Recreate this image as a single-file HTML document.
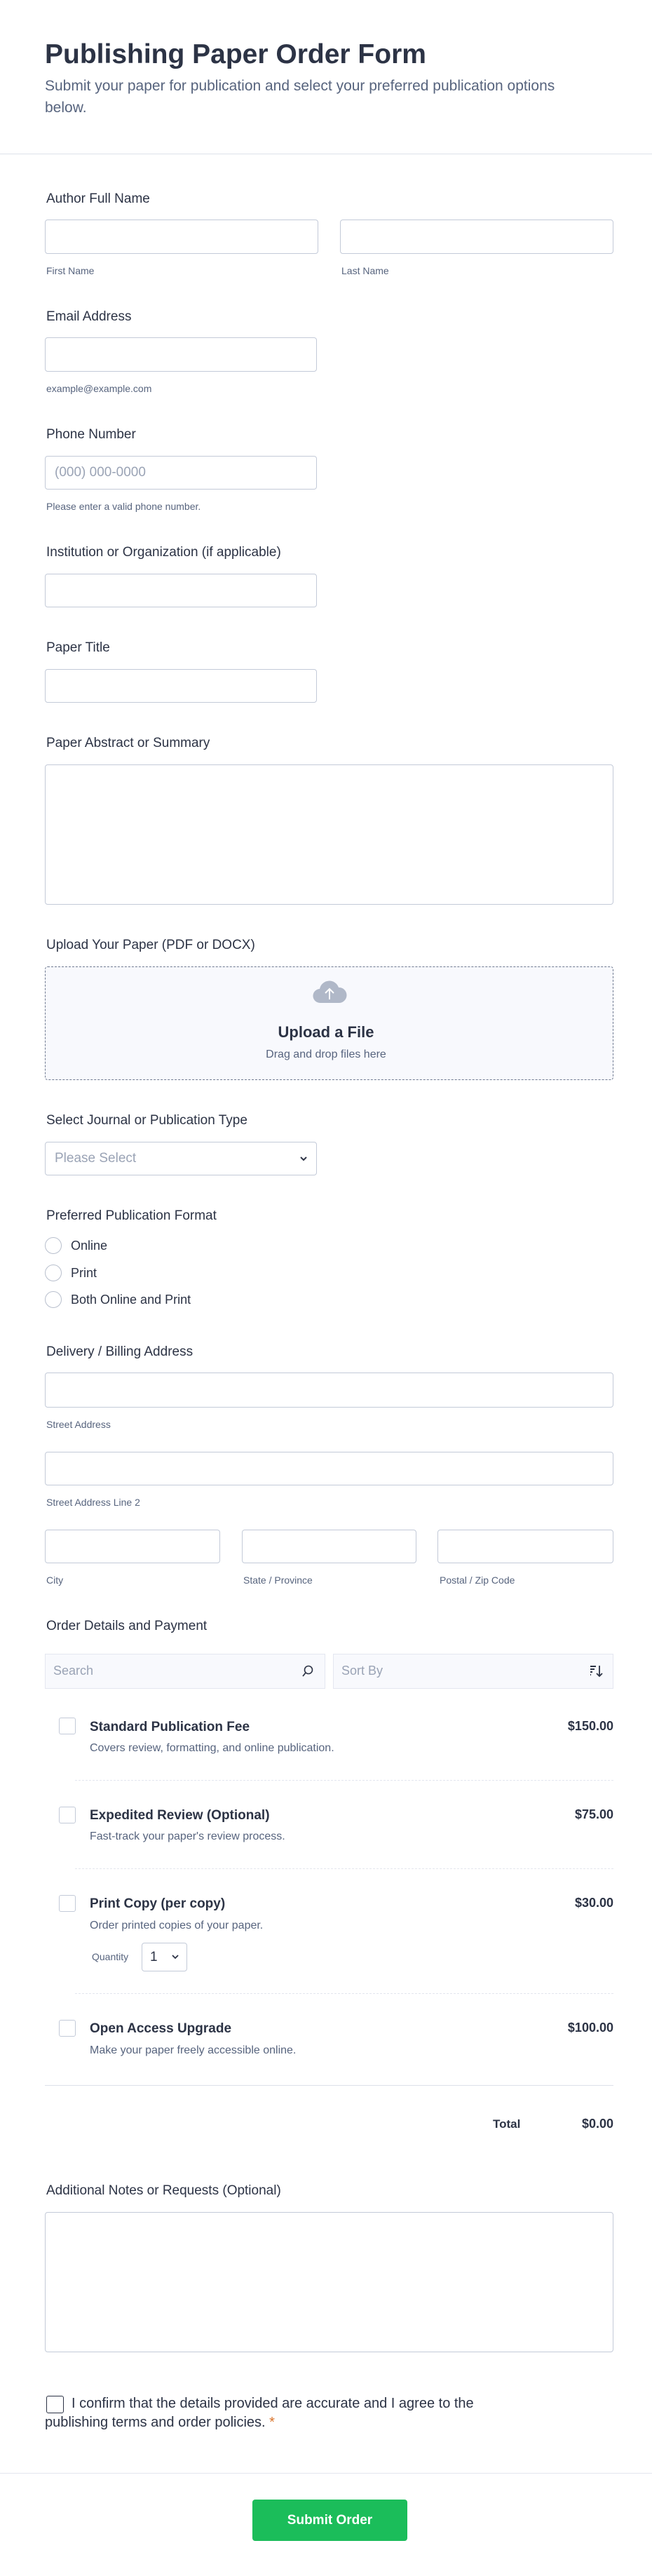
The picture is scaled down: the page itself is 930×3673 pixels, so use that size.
<!DOCTYPE html>
<html><head><meta charset="utf-8"><style>
*{box-sizing:border-box;margin:0;padding:0}
body{width:930px;height:3673px;position:relative;background:#fff;font-family:"Liberation Sans",sans-serif;color:#2c3345;overflow:hidden}
.a{position:absolute}
.lbl{position:absolute;left:66px;font-size:19px;color:#2c3345;line-height:24px}
.sub{position:absolute;font-size:14px;color:#57647e;line-height:16px}
.in{position:absolute;border:1px solid #c3cad8;border-radius:4px;background:#fff}
.ph{color:#9aa3b5;font-size:19px;position:absolute;left:16px}
.radio{position:absolute;left:64px;width:24px;height:24px;border:1px solid #b8bfcd;border-radius:50%}
.rt{position:absolute;left:101px;font-size:18px;line-height:22px}
.cb{position:absolute;left:84px;width:24px;height:24px;border:1px solid #c3cad8;border-radius:3px}
.it{position:absolute;left:128px;font-size:19px;font-weight:bold;line-height:24px}
.id{position:absolute;left:128px;font-size:16px;color:#57647e;line-height:20px}
.pr{position:absolute;right:55px;font-size:18px;font-weight:bold;line-height:22px}
.dash{position:absolute;left:107px;width:768px;border-top:1px dashed #e3e6ee}
</style></head><body>
<div class="a" style="left:64px;top:54px;font-size:39px;font-weight:bold;line-height:48px;color:#2c3345">Publishing Paper Order Form</div>
<div class="a" style="left:64px;top:107px;width:770px;font-size:21px;line-height:31px;color:#57647e">Submit your paper for publication and select your preferred publication options below.</div>
<div class="a" style="left:0;top:219px;width:930px;border-top:1px solid #dde1ea"></div>

<div class="lbl" style="top:272px">Author Full Name</div>
<div class="in" style="left:64px;top:313px;width:390px;height:49px"></div>
<div class="in" style="left:485px;top:313px;width:390px;height:49px"></div>
<div class="sub" style="left:66px;top:378px">First Name</div>
<div class="sub" style="left:487px;top:378px">Last Name</div>

<div class="lbl" style="top:440px">Email Address</div>
<div class="in" style="left:64px;top:481px;width:388px;height:49px"></div>
<div class="sub" style="left:66px;top:546px">example@example.com</div>

<div class="lbl" style="top:608px">Phone Number</div>
<div class="in" style="left:64px;top:650px;width:388px;height:48px"><span class="ph" style="top:12px;left:13px">(000) 000-0000</span></div>
<div class="sub" style="left:66px;top:714px">Please enter a valid phone number.</div>

<div class="lbl" style="top:776px">Institution or Organization (if applicable)</div>
<div class="in" style="left:64px;top:818px;width:388px;height:48px"></div>

<div class="lbl" style="top:912px">Paper Title</div>
<div class="in" style="left:64px;top:954px;width:388px;height:48px"></div>

<div class="lbl" style="top:1048px">Paper Abstract or Summary</div>
<div class="in" style="left:64px;top:1090px;width:811px;height:200px"></div>

<div class="lbl" style="top:1336px">Upload Your Paper (PDF or DOCX)</div>
<div class="a" style="left:64px;top:1378px;width:811px;height:162px;border:1px dashed #6f7a91;border-radius:4px;background:#f8f9fd"></div>
<svg class="a" style="left:445px;top:1398px" width="50" height="34" viewBox="0 0 50 34"><path d="M12 32a10 10 0 0 1-1-20 14 14 0 0 1 27-2 10 10 0 0 1 1 22z" fill="#b0b8c8"/><path d="M25 27V12M19 18l6-6 6 6" stroke="#fff" stroke-width="2" fill="none"/></svg>
<div class="a" style="left:0;width:930px;top:1459px;text-align:center;font-size:22px;font-weight:bold;line-height:26px">Upload a File</div>
<div class="a" style="left:0;width:930px;top:1495px;text-align:center;font-size:16px;color:#57647e;line-height:18px">Drag and drop files here</div>

<div class="lbl" style="top:1586px">Select Journal or Publication Type</div>
<div class="in" style="left:64px;top:1628px;width:388px;height:48px"><span class="ph" style="top:12px;left:13px">Please Select</span>
<svg class="a" style="right:12px;top:18px" width="12" height="10" viewBox="0 0 12 10"><path d="M2 3l4 4 4-4" stroke="#2c3345" stroke-width="2" fill="none"/></svg></div>

<div class="lbl" style="top:1722px">Preferred Publication Format</div>
<div class="radio" style="top:1764px"></div><div class="rt" style="top:1765px">Online</div>
<div class="radio" style="top:1803px"></div><div class="rt" style="top:1804px">Print</div>
<div class="radio" style="top:1841px"></div><div class="rt" style="top:1842px">Both Online and Print</div>

<div class="lbl" style="top:1916px">Delivery / Billing Address</div>
<div class="in" style="left:64px;top:1957px;width:811px;height:50px"></div>
<div class="sub" style="left:66px;top:2023px">Street Address</div>
<div class="in" style="left:64px;top:2070px;width:811px;height:48px"></div>
<div class="sub" style="left:66px;top:2134px">Street Address Line 2</div>
<div class="in" style="left:64px;top:2181px;width:250px;height:48px"></div>
<div class="in" style="left:345px;top:2181px;width:249px;height:48px"></div>
<div class="in" style="left:624px;top:2181px;width:251px;height:48px"></div>
<div class="sub" style="left:66px;top:2245px">City</div>
<div class="sub" style="left:347px;top:2245px">State / Province</div>
<div class="sub" style="left:627px;top:2245px">Postal / Zip Code</div>

<div class="lbl" style="top:2307px">Order Details and Payment</div>
<div class="a" style="left:64px;top:2358px;width:400px;height:50px;border:1px solid #e4e7f0;background:#f8f9fd"><span class="ph" style="top:13px;left:11px;font-size:18px">Search</span>
<svg class="a" style="right:14px;top:14px" width="20" height="20" viewBox="0 0 20 20"><circle cx="11" cy="8" r="5.5" stroke="#2c3345" stroke-width="1.6" fill="none"/><path d="M7 12l-4 5" stroke="#2c3345" stroke-width="1.8"/></svg></div>
<div class="a" style="left:475px;top:2358px;width:400px;height:50px;border:1px solid #e4e7f0;background:#f8f9fd"><span class="ph" style="top:13px;left:11px;font-size:18px">Sort By</span>
<svg class="a" style="right:12px;top:13px" width="22" height="22" viewBox="0 0 22 22"><path d="M2 4h8M2 8h6M2 12h3M2 16h1" stroke="#2c3345" stroke-width="2"/><path d="M15 3v15M11 14l4 4 4-4" stroke="#2c3345" stroke-width="1.8" fill="none"/></svg></div>

<div class="cb" style="top:2449px"></div><div class="it" style="top:2451px">Standard Publication Fee</div><div class="pr" style="top:2450px">$150.00</div>
<div class="id" style="top:2483px">Covers review, formatting, and online publication.</div>
<div class="dash" style="top:2538px"></div>
<div class="cb" style="top:2576px"></div><div class="it" style="top:2577px">Expedited Review (Optional)</div><div class="pr" style="top:2576px">$75.00</div>
<div class="id" style="top:2609px">Fast-track your paper's review process.</div>
<div class="dash" style="top:2664px"></div>
<div class="cb" style="top:2702px"></div><div class="it" style="top:2703px">Print Copy (per copy)</div><div class="pr" style="top:2702px">$30.00</div>
<div class="id" style="top:2736px">Order printed copies of your paper.</div>
<div class="a" style="left:131px;top:2782px;font-size:14px;color:#57647e">Quantity</div>
<div class="in" style="left:202px;top:2770px;width:65px;height:41px"><span class="a" style="left:11px;top:9px;font-size:19px">1</span>
<svg class="a" style="right:11px;top:15px" width="10" height="8" viewBox="0 0 10 8"><path d="M1 2l4 4 4-4" stroke="#2c3345" stroke-width="1.8" fill="none"/></svg></div>
<div class="dash" style="top:2842px"></div>
<div class="cb" style="top:2880px"></div><div class="it" style="top:2881px">Open Access Upgrade</div><div class="pr" style="top:2880px">$100.00</div>
<div class="id" style="top:2914px">Make your paper freely accessible online.</div>
<div class="a" style="left:64px;top:2973px;width:811px;border-top:1px solid #dde1ea"></div>
<div class="a" style="left:703px;top:3019px;font-size:17px;font-weight:bold">Total</div>
<div class="a" style="right:55px;top:3018px;font-size:18px;font-weight:bold">$0.00</div>

<div class="lbl" style="top:3112px">Additional Notes or Requests (Optional)</div>
<div class="in" style="left:64px;top:3154px;width:811px;height:200px"></div>

<div class="a" style="left:66px;top:3416px;width:25px;height:25px;border:1.5px solid #2c3345;border-radius:3px"></div>
<div class="a" style="left:64px;top:3414px;width:680px;font-size:20px;line-height:27px;text-indent:38px">I confirm that the details provided are accurate and I agree to the publishing terms and order policies. <span style="color:#d9742c">*</span></div>
<div class="a" style="left:0;top:3526px;width:930px;border-top:1px solid #e3e6ee"></div>
<div class="a" style="left:360px;top:3564px;width:221px;height:59px;background:#1bbd5a;border-radius:4px;color:#fff;font-size:19px;font-weight:bold;text-align:center;line-height:59px">Submit Order</div>
</body></html>
